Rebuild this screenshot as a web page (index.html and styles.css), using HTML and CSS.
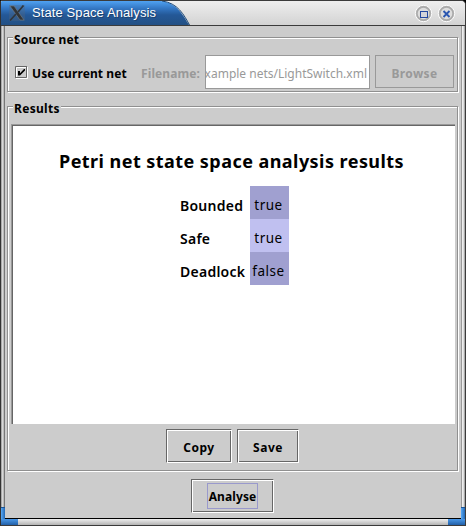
FILE: index.html
```html
<!DOCTYPE html>
<html lang="en">
<head>
<meta charset="utf-8">
<title>State Space Analysis</title>
<link rel="stylesheet" href="styles.css">
</head>
<body>
<div class="window">
  <header class="titlebar">
    <svg class="title-shape" width="192" height="24" viewBox="0 0 192 24">
      <defs><linearGradient id="blue" x1="0" y1="0" x2="0" y2="1"><stop offset="0" stop-color="#50a2f2"/><stop offset=".3" stop-color="#3478c5"/><stop offset=".58" stop-color="#245897"/><stop offset="1" stop-color="#235084"/></linearGradient></defs>
      <path d="M0 0H160C176 2 182 14 188 24H0Z" fill="url(#blue)"/>
      <path d="M161 0C177 2 183 14 188.500 24" fill="none" stroke="#194779"/>
    </svg>
    <svg class="x-logo" width="16" height="16" viewBox="0 0 16 16">
      <path d="M0 0H16V16H0Z" fill="#506880" opacity=".35"/>
      <path d="M1 1H5L15 15H11Z" fill="#303438" stroke="#767c82" stroke-width=".6"/>
      <path d="M14.500 0.500L9 7M7 9L1 15.500" stroke="#30363c" stroke-width="1.700"/>
    </svg>
    <h1>State Space Analysis</h1>
    <div class="controls">
      <svg width="19" height="19" viewBox="0 0 19 19"><circle cx="9.500" cy="9.500" r="8.200" fill="#c6c6c6" stroke="#fafafa" stroke-width="1"/><circle cx="9.500" cy="9.500" r="6.600" fill="#ddd" stroke="#aaa" stroke-width="1.600"/><rect x="6.500" y="7.500" width="7" height="6" fill="#d3d3d9" stroke="#2448a0"/></svg>
      <svg width="19" height="19" viewBox="0 0 19 19"><circle cx="9.500" cy="9.500" r="8.200" fill="#c6c6c6" stroke="#fafafa" stroke-width="1"/><circle cx="9.500" cy="9.500" r="6.600" fill="#ddd" stroke="#aaa" stroke-width="1.600"/><path d="M6.500 7L12.500 13M12.500 7L6.500 13" stroke="#2a56b0" stroke-width="1.900"/></svg>
    </div>
  </header>
  <div class="middle">
    <div class="edge left"><i></i></div>
    <main>
      <section class="group source">
        <h2><span class="t-source">Source net</span></h2>
        <div class="source-row">
          <svg class="check" width="13" height="13" viewBox="0 0 13 13"><path d="M1.500 12.500V1.500H12.500V12.500" fill="none" stroke="#fff"/><path d="M1 12.500H12.500V1" fill="none" stroke="#fff"/><path d="M.5 12V.5H12M1 11.500H11.500V1" fill="none" stroke="#666"/><path d="M3 5H5V7.300L9 3H10V4.500L5 9.500H3Z" fill="#000"/></svg>
          <span class="use">Use current net</span>
          <span class="filename">Filename:</span>
          <div class="field"><span>xample nets/LightSwitch.xml</span></div>
          <div class="button disabled"><span class="t-browse">Browse</span></div>
        </div>
      </section>
      <section class="group results">
        <h2><span class="t-results">Results</span></h2>
        <div class="report">
          <h3>Petri net state space analysis results</h3>
          <div class="table">
            <b>Bounded</b><span class="v">true</span>
            <b>Safe</b><span class="v light">true</span>
            <b>Deadlock</b><span class="v">false</span>
          </div>
        </div>
        <div class="actions">
          <div class="button copy"><span>Copy</span></div>
          <div class="button save"><span>Save</span></div>
        </div>
      </section>
      <div class="button analyse"><span class="focus">Analyse</span></div>
    </main>
    <div class="edge right"><i></i></div>
  </div>
  <footer><i class="corner"></i><i class="bar"></i><i class="corner"></i></footer>
</div>
</body>
</html>
```
FILE: styles.css
```css
* { box-sizing: border-box; }
body { margin: 0; background: #000; font: bold 12px/16px "Noto Sans", sans-serif; color: #000; }
h1, h2, h3 { margin: 0; font-size: inherit; }
span, b, h1, h3 { white-space: nowrap; }
.window { width: 466px; height: 526px; display: flex; flex-direction: column; border: 1px solid #3b3b3b; border-left-color: #333; border-radius: 2px 5px 0 0; overflow: hidden; background: #ccc; }
.titlebar { position: relative; height: 25px; flex: none; display: flex; align-items: center; padding: 0 9px 0 8px; background: linear-gradient(#eee, #d3d3d3); border-bottom: 1px solid #3b3b3b; }
.title-shape { position: absolute; left: 0; top: 0; }
.x-logo { position: relative; margin-top: -1px; }
h1 { position: relative; font: 13px/16px "Liberation Sans", sans-serif; color: #fff; margin-left: 7px; letter-spacing: .1px; text-shadow: 1px 1px #1d416f; margin-top: -1px; }
.controls { margin-left: auto; display: flex; gap: 4px; }
.middle { height: 493px; flex: none; display: flex; }
.edge { width: 4px; flex: none; display: flex; align-items: flex-end; background: linear-gradient(90deg, #aaa 0 25%, #d8d8d8 25% 50%, #bbb 50% 75%, #777 75%); }
.edge i { width: 4px; height: 12px; background: linear-gradient(90deg, #58aaf8, #2468b4); border-top: 1px solid #1d5595; }
.edge.right { background: linear-gradient(90deg, #999 0 25%, #eee 25% 50%, #ddd 50% 75%, #aaa 75%); }
main { width: 456px; padding: 11px 3px 0 2px; border-bottom: 1px solid #000; }
.group { width: 451px; border: 1px solid #909090; box-shadow: inset 1px 1px #fff, 1px 1px #fff; }
.source { height: 55px; }
.results { height: 365px; margin-top: 14px; }
.group h2 { width: max-content; height: 16px; margin: -7px 0 0 5px; padding: 0 1px; background: #ccc; line-height: 17px; }
.t-source { letter-spacing: .15px; }
.t-results { letter-spacing: .3px; }
.t-browse { letter-spacing: .4px; }
.source-row { display: flex; padding-left: 7px; margin-top: 8px; align-items: flex-start; }
.check { margin: 11px 4px 0 0; flex: none; }
.use { width: 109px; margin-top: 11px; letter-spacing: .1px; }
.filename { width: 64px; margin-top: 11px; color: #999; letter-spacing: .1px; }
.field { width: 165px; height: 34px; border: 1px solid #999; background: #fff; color: #999; font-weight: normal; display: flex; align-items: center; justify-content: flex-end; padding: 3px 2px 0 0; overflow: hidden; }
.button { height: 34px; display: flex; align-items: center; justify-content: center; padding-top: 3px; border: 1px solid #fff; border-top-color: #666; border-left-color: #666; box-shadow: inset 1px 1px #fff, inset -1px -1px #666; }
.disabled { width: 79px; height: 33px; margin-left: 5px; padding-top: 4px; border-color: #999; box-shadow: none; color: #999; }
.report { width: 444px; height: 300px; margin: 8px 0 0 3px; background: #fff; border: 1px solid #999; border-right: 0; border-bottom: 0; box-shadow: inset 1px 1px #666; padding-top: 24px; }
h3 { font-size: 18px; line-height: 24px; margin-left: 47px; letter-spacing: .45px; }
.table { display: grid; grid-template-columns: 70px 39px; grid-template-rows: repeat(3, 33px); margin: 13px 0 0 168px; font-size: 14px; }
.table b { line-height: 39px; font-weight: 600; letter-spacing: .25px; }
.v { height: 33px; background: #a0a0d0; text-align: center; line-height: 39px; font-weight: normal; font-size: 13.5px; letter-spacing: .5px; padding-right: 2px; }
.light { background: #c0c0f0; }
.actions { display: flex; gap: 5px; margin: 5px 0 0 158px; }
.actions span { letter-spacing: .5px; }
.copy { width: 66px; }
.save { width: 62px; }
.analyse { width: 83px; margin: 8px 0 0 184px; padding-top: 0; }
.focus { border: 1px solid #99c; width: 51px; height: 26px; line-height: 26px; display: flex; justify-content: center; letter-spacing: .1px; }
footer { height: 6px; flex: none; display: flex; }
.bar { flex: 1; background: linear-gradient(#eee, #b4b4b4); }
.corner { width: 17px; background: linear-gradient(#4a98e8, #2260a8); }
```
